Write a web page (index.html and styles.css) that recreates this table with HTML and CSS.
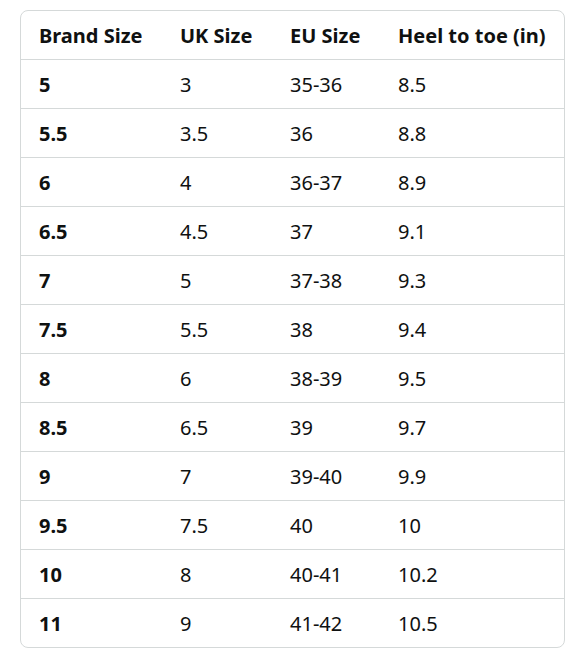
FILE: index.html
```html
<!DOCTYPE html>
<html lang="en">
<head>
  <meta charset="UTF-8">
  <meta name="viewport" content="width=device-width, initial-scale=1.0">
  <link rel="stylesheet" href="styles.css">
  <title>Size Chart</title>
</head>
<body>

<div class="size-chart">
  <table class="size-table">
    <colgroup>
      <col class="col-brand">
      <col class="col-uk">
      <col class="col-eu">
      <col>
    </colgroup>
    <thead>
      <tr>
        <th>Brand Size</th>
        <th>UK Size</th>
        <th>EU Size</th>
        <th>Heel to toe (in)</th>
      </tr>
    </thead>
    <tbody>
      <tr><td class="brand">5</td><td>3</td><td>35-36</td><td>8.5</td></tr>
      <tr><td class="brand">5.5</td><td>3.5</td><td>36</td><td>8.8</td></tr>
      <tr><td class="brand">6</td><td>4</td><td>36-37</td><td>8.9</td></tr>
      <tr><td class="brand">6.5</td><td>4.5</td><td>37</td><td>9.1</td></tr>
      <tr><td class="brand">7</td><td>5</td><td>37-38</td><td>9.3</td></tr>
      <tr><td class="brand">7.5</td><td>5.5</td><td>38</td><td>9.4</td></tr>
      <tr><td class="brand">8</td><td>6</td><td>38-39</td><td>9.5</td></tr>
      <tr><td class="brand">8.5</td><td>6.5</td><td>39</td><td>9.7</td></tr>
      <tr><td class="brand">9</td><td>7</td><td>39-40</td><td>9.9</td></tr>
      <tr><td class="brand">9.5</td><td>7.5</td><td>40</td><td>10</td></tr>
      <tr><td class="brand">10</td><td>8</td><td>40-41</td><td>10.2</td></tr>
      <tr><td class="brand">11</td><td>9</td><td>41-42</td><td>10.5</td></tr>
    </tbody>
  </table>
</div>

</body>
</html>
```

FILE: styles.css
```css
body {
  margin: 0;
  padding: 10px 18px 0 20px;
  font-family: "Noto Sans", Arial, sans-serif;
  font-size: 20px;
  color: #0f1111;
  background-color: #fff;
}

.size-chart {
  width: 545px;
  border: 1px solid #d5d9d9;
  border-radius: 8px;
  overflow: hidden;
  box-sizing: border-box;
}

.size-table {
  width: 100%;
  border-collapse: collapse;
  table-layout: fixed;
}

.col-brand {
  width: 141px;
}

.col-uk {
  width: 110px;
}

.col-eu {
  width: 108px;
}

.size-table th,
.size-table td {
  height: 48px;
  padding: 0 0 0 18px;
  text-align: left;
  vertical-align: middle;
  white-space: nowrap;
}

.size-table th {
  font-weight: bold;
}

.size-table tr + tr td,
.size-table tbody tr:first-child td {
  border-top: 1px solid #d5d9d9;
}

.brand {
  font-weight: bold;
}
```
